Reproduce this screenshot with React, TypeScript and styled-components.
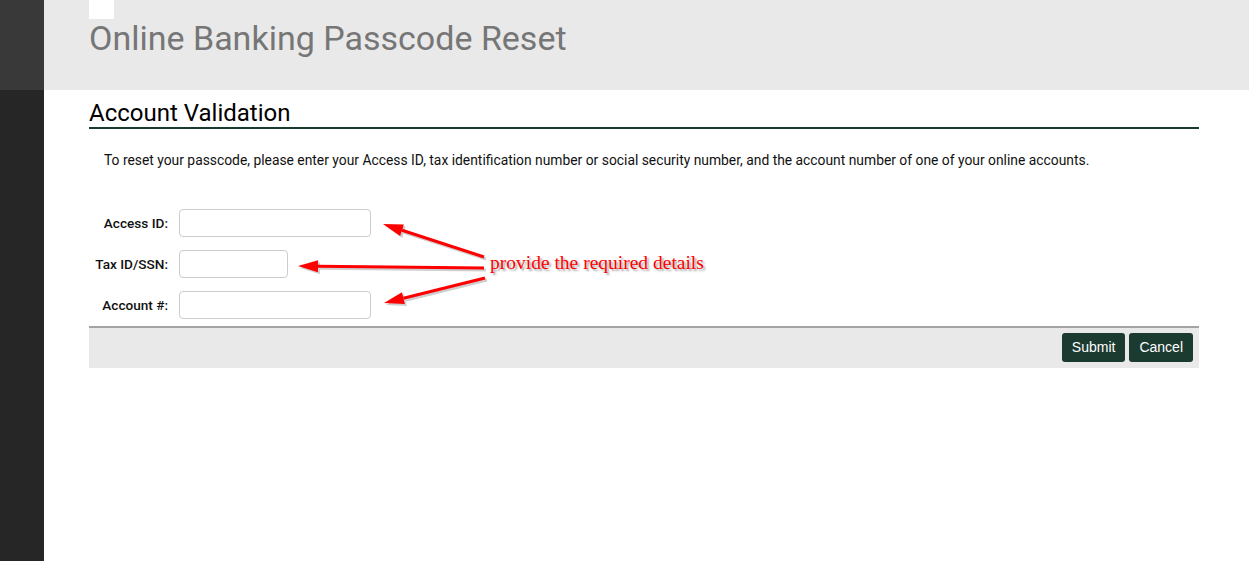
import React from "react";
import styled, { createGlobalStyle } from "styled-components";

const GlobalStyle = createGlobalStyle`
  html, body {
    margin: 0;
    padding: 0;
    background: #ffffff;
    font-family: Roboto, "Liberation Sans", Arial, sans-serif;
  }
`;

const fields = [
  { label: "Access ID:", width: 192 },
  { label: "Tax ID/SSN:", width: 109 },
  { label: "Account #:", width: 192 },
];

function Arrow({ x1, y1, x2, y2 }: { x1: number; y1: number; x2: number; y2: number }) {
  const ang = Math.atan2(y2 - y1, x2 - x1);
  const len = 20;
  const half = 6;
  const bx = x2 - Math.cos(ang) * len;
  const by = y2 - Math.sin(ang) * len;
  const px = -Math.sin(ang) * half;
  const py = Math.cos(ang) * half;
  const head = `${x2},${y2} ${bx + px},${by + py} ${bx - px},${by - py}`;
  return (
    <>
      <g transform="translate(2,2)" opacity="0.35">
        <line x1={x1} y1={y1} x2={bx} y2={by} stroke="#777" strokeWidth="3" />
        <polygon points={head} fill="#777" />
      </g>
      <line x1={x1} y1={y1} x2={bx} y2={by} stroke="#ff0000" strokeWidth="3" />
      <polygon points={head} fill="#ff0000" />
    </>
  );
}

export default function App() {
  return (
    <Page>
      <GlobalStyle />
      <Sidebar>
        <SidebarTop />
      </Sidebar>
      <Main>
        <Header>
          <LogoBox />
          <Title>Online Banking Passcode Reset</Title>
        </Header>
        <Content>
          <SectionHeading>Account Validation</SectionHeading>
          <Intro>
            To reset your passcode, please enter your Access ID, tax identification number or social
            security number, and the account number of one of your online accounts.
          </Intro>
          <Form>
            {fields.map((f) => (
              <Row key={f.label}>
                <Label>{f.label}</Label>
                <Input type="text" $width={f.width} />
              </Row>
            ))}
          </Form>
          <Footer>
            <Button>Submit</Button>
            <Button>Cancel</Button>
          </Footer>
        </Content>
      </Main>

      <Overlay width="1249" height="561">
        <Arrow x1={484} y1={257} x2={383} y2={224} />
        <Arrow x1={484} y1={268} x2={298} y2={266} />
        <Arrow x1={485} y1={278} x2={384} y2={303} />
      </Overlay>
      <Note>provide the required details</Note>
    </Page>
  );
}

const Page = styled.div`
  position: relative;
  display: flex;
  min-height: 100vh;
  overflow: hidden;
`;

const Sidebar = styled.div`
  flex: 0 0 44px;
  background: #262626;
`;

const SidebarTop = styled.div`
  height: 90px;
  background: #393939;
`;

const Main = styled.div`
  flex: 1;
`;

const Header = styled.div`
  height: 90px;
  background: #e9e9e9;
  padding-left: 45px;
  box-sizing: border-box;
`;

const LogoBox = styled.div`
  width: 25px;
  height: 19px;
  background: #ffffff;
`;

const Title = styled.h1`
  margin: 0;
  font-family: Roboto, sans-serif;
  font-size: 34px;
  line-height: 38px;
  font-weight: 400;
  color: #767676;
`;

const Content = styled.div`
  margin-left: 45px;
  width: 1110px;
`;

const SectionHeading = styled.h2`
  margin: 9px 0 0;
  font-family: Roboto, sans-serif;
  font-size: 24px;
  line-height: 28px;
  font-weight: 400;
  color: #000;
  border-bottom: 2px solid #1b3a30;
`;

const Intro = styled.p`
  margin: 22px 0 0 15px;
  font-size: 13.85px;
  line-height: 18px;
  color: #111;
`;

const Form = styled.div`
  margin-top: 40px;
  display: flex;
  flex-direction: column;
  gap: 13px;
`;

const Row = styled.div`
  display: flex;
  align-items: center;
  gap: 11px;
`;

const Label = styled.label`
  width: 79px;
  text-align: right;
  font-family: Roboto, sans-serif;
  font-size: 13.6px;
  font-weight: 500;
  color: #111;
`;

const Input = styled.input<{ $width: number }>`
  width: ${(p) => p.$width}px;
  height: 28px;
  box-sizing: border-box;
  border: 1px solid #cccccc;
  border-radius: 4px;
  background: #fff;
  padding: 4px 6px;
  font-size: 13px;
  outline: none;
`;

const Footer = styled.div`
  margin-top: 7px;
  height: 42px;
  border-top: 2px solid #a3a3a3;
  background: #e9e9e9;
  display: flex;
  justify-content: flex-end;
  align-items: center;
  gap: 4px;
  padding-right: 6px;
  padding-bottom: 2px;
  box-sizing: border-box;
`;

const Button = styled.button`
  height: 29px;
  padding: 0 10px;
  background: #1b3a30;
  color: #fff;
  border: none;
  border-radius: 3px;
  font-family: "Liberation Sans", Arial, sans-serif;
  font-size: 14px;
  cursor: pointer;
`;

const Overlay = styled.svg`
  position: absolute;
  top: 0;
  left: 0;
  pointer-events: none;
`;

const Note = styled.div`
  position: absolute;
  left: 490px;
  top: 252px;
  font-family: "Liberation Serif", "Times New Roman", serif;
  font-size: 19.5px;
  line-height: 22px;
  color: #ff0000;
  text-shadow: 2px 2px 2px rgba(0, 0, 0, 0.35);
  white-space: nowrap;
`;
